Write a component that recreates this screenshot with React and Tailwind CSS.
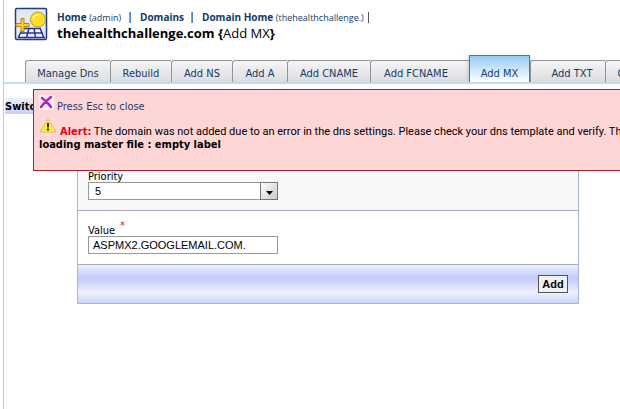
import React from "react";

const tabs = [
  { label: "Manage Dns", width: "w-[85px]" },
  { label: "Rebuild", width: "w-[61px]" },
  { label: "Add NS", width: "w-[61px]" },
  { label: "Add A", width: "w-[55px]" },
  { label: "Add CNAME", width: "w-[83px]" },
  { label: "Add FCNAME", width: "w-[99px]", inner: "pr-2" },
  { label: "Add MX", width: "w-[61px]", active: true },
  { label: "Add TXT", width: "w-[75px]", inner: "pl-2" },
  { label: "Custom", width: "w-[62px]" },
];

function DnsIcon() {
  return (
    <svg viewBox="0 0 34 34" className="h-[34px] w-[34px] shrink-0" aria-hidden="true">
      <rect x="1.500" y="1.500" width="31" height="31" rx="1.5" fill="#e4e8f2" stroke="#203f83" strokeWidth="1.5" />
      <path d="M9 21H26L31 30H3Z" fill="#f4f6ff" />
      <path d="M4 31L9 21M12.500 31L15 21M21.500 31L20 21M30 31L26 21M8 21.500H27M6 26H29M4 30.500H31" fill="none" stroke="#2b32a0" strokeWidth="1.500" />
      <circle cx="24" cy="12.500" r="7.500" fill="#ffdc28" stroke="#c39a18" />
      <path d="M19 12a5 5 0 0 1 6-4" fill="none" stroke="#fff29a" strokeWidth="1.500" />
      <path d="M7 11.500h3v5h5v3h-5v5H7v-5H2v-3h5z" fill="#ffcf2c" stroke="#b28216" />
    </svg>
  );
}

function CloseIcon() {
  return (
    <svg viewBox="0 0 15 15" className="h-[15px] w-[15px]" aria-hidden="true">
      <rect width="15" height="15" fill="#fff5fb" />
      <path d="M3 3C6 5 9 8 12 12M12 2C8 5 5 8 2 12" fill="none" stroke="#b51fc0" strokeWidth="2.500" strokeLinecap="round" />
    </svg>
  );
}

function WarningIcon() {
  return (
    <svg viewBox="0 0 18 16" className="h-4 w-[18px] shrink-0" aria-hidden="true">
      <path d="M9 1L17 14H1Z" fill="#fbe944" stroke="#d8c06a" strokeLinejoin="round" />
      <path d="M9 5V9.500" stroke="#3a3205" strokeWidth="2" />
      <rect x="8" y="10.500" width="2" height="2" fill="#3a3205" />
    </svg>
  );
}

function Separator({ blue }) {
  return <span className={blue ? "h-[11px] w-0.5 border-l border-[#c09858] bg-[#4f86c4]" : "h-[11px] w-px bg-[#555555]"} />;
}

export default function App() {
  return (
    <div className="min-h-screen overflow-hidden bg-white pl-[3px] font-['DejaVu_Sans_Condensed','DejaVu_Sans',sans-serif] text-[11px] leading-[13px] text-black">
      <div className="relative min-h-screen border-l border-[#b4cfe0]">
        <header className="flex h-[55px] gap-[9px] whitespace-nowrap pl-[10px] pt-[7px] font-['Open_Sans',sans-serif]">
          <DnsIcon />
          <div className="pt-1">
            <nav className="flex items-center text-[10px] text-[#123a66]" aria-label="Breadcrumb">
              <a href="#home" className="w-[72px]"><b>Home</b> <span className="text-[9px]">(admin)</span></a>
              <Separator blue />
              <a href="#domains" className="ml-[9px] w-[51px] font-bold">Domains</a>
              <Separator blue />
              <a href="#domain" className="ml-[9px] w-[166px]"><b>Domain Home</b> <span className="text-[9px]">(thehealthchallenge.)</span></a>
              <Separator />
            </nav>
            <h1 className="pt-px text-[13px] leading-4"><b>thehealthchallenge.com {"{"}</b>Add MX<b>{"}"}</b></h1>
          </div>
        </header>

        <nav className="flex h-[29px] items-end overflow-hidden border-b-2 border-[#c3dcf2] pl-[21px]" aria-label="DNS sections">
          {tabs.map((tab) =>
            tab.active ? (
              <a key={tab.label} href="#tab" aria-current="page" className={`${tab.width} flex h-[27px] shrink-0 items-center justify-center whitespace-nowrap border border-b-0 border-[#54788f] bg-linear-to-b from-[#94cdf4] to-white pt-2 text-[#123f70] shadow-[0_0_4px_#77777788]`}>
                {tab.label}
              </a>
            ) : (
              <a key={tab.label} href="#tab" className={`${tab.width} ${tab.inner || ""} flex h-[22px] shrink-0 items-center justify-center whitespace-nowrap rounded-tl-[3px] border-l border-t border-[#91949b] bg-linear-to-b from-[#f5f5f7] via-[#e9e9ec] to-[#dcdde1] pt-1 text-[#173a62]`}>
                {tab.label}
              </a>
            )
          )}
        </nav>

        <main className="pt-[14px]">
          <h2 className="ml-px h-4 w-20 bg-linear-to-b from-[#edf0ff] to-[#c5cff8] pt-0.5 font-bold">Switch</h2>
          <form className="ml-[73px] mr-[41px] mt-4 border border-[#aab4da]" onSubmit={(e) => e.preventDefault()}>
            <div className="border-b border-[#a5a9b8] bg-[#f8f7f9] pb-[10px] pl-[10px] pt-[40px]">
              <label htmlFor="priority" className="block leading-[11px]">Priority</label>
              <div className="relative w-[190px]">
                <select id="priority" defaultValue="5" className="block h-[18px] w-full appearance-none border border-[#999999] bg-white pl-[6px] font-['Liberation_Sans',sans-serif] text-[11px]">
                  <option>5</option>
                  <option>10</option>
                </select>
                <span className="pointer-events-none absolute right-0 top-0 flex h-[18px] w-[18px] items-center justify-center border border-[#777777] bg-linear-to-br from-white to-[#c9c9c9]">
                  <svg viewBox="0 0 7 4" className="mt-1 h-1 w-[7px]" aria-hidden="true"><path d="M0 0H7L3.500 4Z" /></svg>
                </span>
              </div>
            </div>
            <div className="border-b border-[#a5a9b8] bg-white pb-[10px] pl-[10px] pt-[9px]">
              <label htmlFor="value" className="flex h-4 items-end gap-[5px] leading-[11px]">
                Value <span className="self-start text-[#e02020]">*</span>
              </label>
              <input id="value" defaultValue="ASPMX2.GOOGLEMAIL.COM." className="block h-[18px] w-[190px] border border-[#999999] bg-white px-1 font-['Liberation_Sans',sans-serif] text-[11px]" />
            </div>
            <div className="flex h-[38px] items-center justify-end bg-[linear-gradient(to_bottom,#eef0ff_0%,#c1caf8_35%,#eef1ff_72%,#cbd4fa_100%)] pr-[10px]">
              <button type="submit" className="h-[18px] w-[30px] border border-[#555555] bg-[#f0f0f0] font-['Liberation_Sans',sans-serif] text-[11px] font-bold">Add</button>
            </div>
          </form>
        </main>

        <section role="alert" className="absolute left-[29px] right-[-40px] top-[89px] h-[82px] overflow-hidden whitespace-nowrap border border-[#b51d2b] bg-[#ffd6d6] pl-[5px] pt-[5px]">
          <button type="button" className="flex items-start gap-[3px] text-[#263c6c]">
            <CloseIcon /><span className="pt-[5px]">Press Esc to close</span>
          </button>
          <div className="mt-[5px] flex items-start gap-[3px]">
            <WarningIcon />
            <p className="pt-[7px] font-['Roboto',sans-serif]"><b className="font-['DejaVu_Sans_Condensed',sans-serif] text-[#e60012]">Alert:</b> The domain was not added due to an error in the dns settings. Please check your dns template and verify. The error is</p>
          </div>
          <b className="block">loading master file : empty label</b>
        </section>
      </div>
    </div>
  );
}
